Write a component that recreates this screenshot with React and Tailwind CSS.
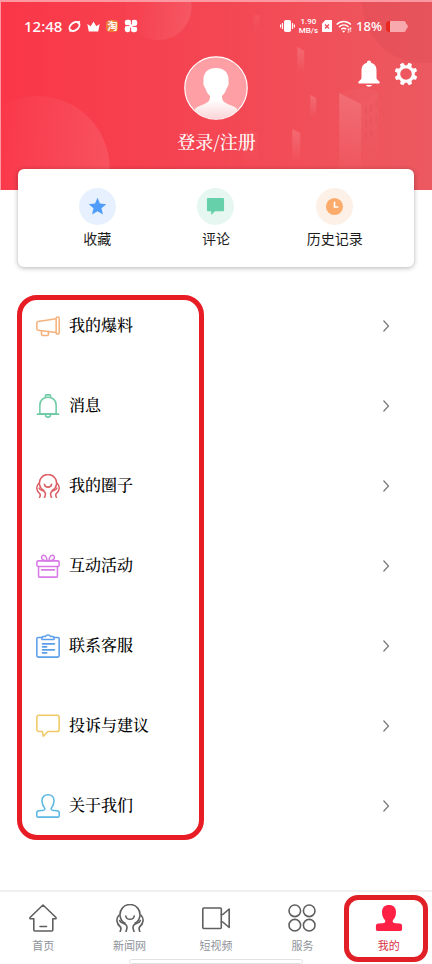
import React from 'react';

const SERIF = "font-['Noto_Serif_CJK_SC','Noto_Sans_CJK_SC',serif]";
const PERSON =
  'M14 .9c-4.200 0-7 2.600-7 7 0 3.400 1 6 2.700 7.900.7.800.9 1.900.2 2.600-.5.500-1.300.7-2.400.8l-4.200.3c-1.500.1-2.400 1-2.400 2.500v3.300c0 1 .6 1.700 1.700 1.700h22.800c1.100 0 1.700-.7 1.700-1.700V22c0-1.500-.9-2.400-2.400-2.500l-4.200-.3c-1.100-.1-1.900-.3-2.400-.8-.7-.7-.5-1.800.2-2.600C20 13.900 21 11.300 21 7.900c0-4.400-2.800-7-7-7z';

const Line = ({ children, className = 'w-6 h-6', width = 1.8 }) => (
  <svg
    viewBox="0 0 28 28"
    className={className}
    fill="none"
    stroke="currentColor"
    strokeWidth={width}
    strokeLinecap="round"
    strokeLinejoin="round"
    aria-hidden="true"
  >
    {children}
  </svg>
);

const HandsShape = () => (
  <>
    <path d="M9 19.200a10 10 0 1 1 10 0" />
    <path d="M9.800 12c.6 4.400 7.800 4.400 8.400 0" />
    <path d="M3.200 11C1.200 13 .6 14.500 1 17c.4 2.500 1 3.800 2.600 5 1.400 1.100 1.500 3.500.6 5.300M3.700 16.500c.3 1.500 1.300 2 2.800 2.500 2.600.8 4.500 1.800 4.500 4.300 0 1.400-.4 2.700-1 4" />
    <path d="M24.800 11c2 2 2.600 3.500 2.200 6-.4 2.500-1 3.800-2.600 5-1.400 1.100-1.500 3.500-.6 5.300M24.300 16.500c-.3 1.500-1.300 2-2.800 2.500-2.600.8-4.500 1.800-4.500 4.300 0 1.400.4 2.700 1 4" />
  </>
);

const menuItems = [
  {
    name: '我的爆料',
    color: 'text-[#f5b27c]',
    shape: (
      <>
        <path d="M23.500 5.500 2.500 8.800c-1 .2-1.500.8-1.500 1.700v6.800c0 .9.500 1.500 1.500 1.600l21 2.600" />
        <rect x="23.500" y="3.500" width="3.600" height="20" rx="1.500" />
        <path d="M6.500 19.500V24c0 .6.400 1 1 1h6c.6 0 1-.4 1-1v-3.500" />
      </>
    ),
  },
  {
    name: '消息',
    color: 'text-[#6fcaa5]',
    shape: (
      <>
        <path d="M11 4V2c0-.6.400-1 1-1h4c.6 0 1 .4 1 1v2M4.500 23V13c0-5.500 4-9.300 9.500-9.300s9.500 3.800 9.500 9.300v10M1.500 23.500l3-.5h19l3 .5zM11 24c.3 4 5.700 4 6 0" />
      </>
    ),
  },
  { name: '我的圈子', color: 'text-[#dc6066]', shape: <HandsShape /> },
  {
    name: '互动活动',
    color: 'text-[#d97be6]',
    shape: (
      <>
        <rect x="1" y="8" width="26" height="6.500" rx="1.500" />
        <path d="M3 14.500V26c0 .6.400 1 1 1h20c.6 0 1-.4 1-1V14.500M6.500 18.500h15" />
        <path d="M13 8C8.500 8 6 6 6.500 3.500 7 1 10 .5 11.500 3c1 1.500 1.500 3 1.500 5zM15 8c4.500 0 7-2 6.500-4.500C21 1 18 .5 16.500 3 15.500 4.500 15 6 15 8z" />
      </>
    ),
  },
  {
    name: '联系客服',
    color: 'text-[#5b9fea]',
    shape: (
      <>
        <path d="M7 4H2.500C1.600 4 1 4.600 1 5.500v20c0 .9.600 1.500 1.500 1.500h23c.9 0 1.500-.6 1.500-1.500v-20c0-.9-.6-1.500-1.500-1.500H21" />
        <path d="M7 6.500V4c0-.6.400-1 1-1h3c.8-2.500 5.200-2.500 6 0h3c.6 0 1 .4 1 1v2.500zM7.500 11.500h14M7.500 15h5M7.500 18.500h14M7.500 22h5" />
      </>
    ),
  },
  {
    name: '投诉与建议',
    color: 'text-[#f0c966]',
    shape: (
      <path d="M3.500 1.500h21c1.500 0 2.500 1 2.500 2.500v14c0 1.500-1 2.500-2.500 2.500H14L8.500 26l-1-5.500h-4C2 20.500 1 19.500 1 18V4c0-1.500 1-2.500 2.500-2.500z" />
    ),
  },
  { name: '关于我们', color: 'text-[#5cb8e4]', shape: <path d={PERSON} /> },
];

const shortcuts = [
  {
    name: '收藏',
    style: 'bg-[#e6f0fe] text-[#4f9df8]',
    shape: <path d="m10 .8 2.600 6.100 6.600.6-5 4.400 1.500 6.500-5.700-3.500-5.700 3.500 1.500-6.500-5-4.400 6.600-.6z" />,
  },
  {
    name: '评论',
    style: 'bg-[#e5f7f0] text-[#66d0aa]',
    shape: <path d="M2 1h16c.600 0 1 .4 1 1v12c0 .6-.4 1-1 1H9.500l-4 4v-4H2c-.6 0-1-.4-1-1V2c0-.6.400-1 1-1z" />,
  },
  {
    name: '历史记录',
    style: 'bg-[#fdf0e6] text-[#fbac6c]',
    shape: (
      <>
        <circle cx="10" cy="10" r="9" />
        <path d="M10 5v5.500h4" fill="none" stroke="#fff" strokeWidth="1.700" />
      </>
    ),
  },
];

const tabs = [
  {
    name: '首页',
    shape: <path d="M14 1 1 13.500v1.200h3.800V26c0 .6.400 1 1 1h17c.6 0 1-.4 1-1V14.700H27v-1.200zM11 22.500h6.500" />,
  },
  { name: '新闻网', shape: <HandsShape /> },
  {
    name: '短视频',
    shape: (
      <>
        <rect x="0.800" y="4" width="18.500" height="20.500" rx="1" />
        <path d="M19.300 10.500h1.500L27.200 5v18.500l-6.400-5.500h-1.500" />
      </>
    ),
  },
  {
    name: '服务',
    shape: (
      <>
        <circle cx="6.800" cy="6.800" r="5.800" />
        <circle cx="21.200" cy="6.800" r="5.800" />
        <circle cx="6.800" cy="21.200" r="5.800" />
        <circle cx="21.200" cy="21.200" r="5.800" />
      </>
    ),
  },
  { name: '我的', active: true },
];

const HeaderArt = () => (
  <svg
    className="absolute inset-0 w-full h-full"
    viewBox="0 0 432 190"
    preserveAspectRatio="xMidYMid slice"
    aria-hidden="true"
  >
    <defs>
      <linearGradient id="tower" x1="0" y1="0" x2="0" y2="1">
        <stop offset="0" stopColor="#fff" stopOpacity="0.160" />
        <stop offset="1" stopColor="#fff" stopOpacity="0" />
      </linearGradient>
      <linearGradient id="bubble" x1="0.200" y1="0.500" x2="1" y2="0.600">
        <stop offset="0" stopColor="#fff" stopOpacity="0.010" />
        <stop offset="1" stopColor="#fff" stopOpacity="0.100" />
      </linearGradient>
    </defs>
    <circle cx="36" cy="168" r="73" fill="url(#bubble)" />
    <circle cx="158" cy="6" r="33" fill="url(#bubble)" />
    <circle cx="424" cy="0" r="62" fill="#c93c48" fillOpacity="0.160" />
    <path d="M339 92l22 11v78h-22z" fill="url(#tower)" />
    <path d="M361 103l17-12v84h-17z" fill="url(#tower)" opacity="0.300" />
    <path d="M339 92l25-6 14 5-17 12z" fill="#fff" opacity="0.030" />
    <path d="M292 128l8 4v30h-8z" fill="url(#tower)" />
    <path d="M297 46l7 4v22h-7z" fill="url(#tower)" />
    <path d="M310 94l6 3v20h-6z" fill="url(#tower)" />
    <path d="M243 132l8-3 6 4v32h-14z" fill="url(#tower)" opacity="0.300" />
    <path d="M253 14h6v18h-6z" fill="url(#tower)" opacity="0.300" />
    <path
      d="M366 106v8M371 103v8M376 100v8M366 119v8M371 116v8M376 113v8M366 132v6M371 129v6"
      stroke="#c8404c"
      strokeOpacity="0.300"
    />
  </svg>
);

const StatusBar = () => (
  <div className="relative h-12 pl-[23px] pr-6 flex items-center justify-between font-['Noto_Sans',sans-serif]">
    <div className="flex items-center gap-[6px]">
      <span className="text-[15px] leading-5 font-medium">12:48</span>
      <svg viewBox="0 0 13 13" className="w-[13px] h-[13px]" fill="none" stroke="#fff" strokeWidth="1.900" aria-hidden="true">
        <ellipse cx="6.500" cy="6.500" rx="5.600" ry="3.700" transform="rotate(-38 6.500 6.500)" />
        <path d="M1.500 11.500 4 10M9 3l3-1.500" strokeWidth="1.400" />
      </svg>
      <svg viewBox="0 0 13 13" className="w-[13px] h-[13px]" fill="#fff" aria-hidden="true">
        <path d="M.3 4 3.700 6.200 6.500 1.500l2.800 4.700L12.700 4l-1.500 7.500H1.800z" />
      </svg>
      <span className="w-3 h-3 rounded-sm bg-[#ed7b3a] flex items-center justify-center text-[10px] leading-3 font-bold font-['Noto_Sans_CJK_SC',sans-serif]">
        淘
      </span>
      <svg viewBox="0 0 14 14" className="w-[14px] h-[14px]" fill="#fff" aria-hidden="true">
        <rect x="0.800" y="0.800" width="6.400" height="5.600" rx="2.400" />
        <rect x="7.600" y="0.800" width="5.600" height="6.400" rx="2.400" />
        <rect x="6.800" y="7.600" width="6.400" height="5.600" rx="2.400" />
        <rect x="0.800" y="6.800" width="5.600" height="6.400" rx="2.400" />
        <rect x="5" y="5" width="4" height="4" />
        <path d="M7.400 2v3.500M12 7.400H8.500M6.600 12V8.500M2 6.600h3.500" stroke="#f43f4e" strokeWidth="0.800" />
      </svg>
    </div>
    <div className="flex items-center gap-1">
      <svg viewBox="0 0 15 14" className="w-[15px] h-[14px]" fill="#fff" aria-hidden="true">
        <rect x="4" y="1" width="7" height="12" rx="1.800" />
        <path d="M2.500 4v6M.6 5.500v3M12.500 4v6M14.400 5.500v3" stroke="#fff" strokeWidth="1.200" />
      </svg>
      <span className="flex flex-col items-center text-[8px] leading-[9px] font-medium font-['Roboto',sans-serif]">
        <span>1.90</span>
        <span>MB/s</span>
      </span>
      <svg viewBox="0 0 10 12" className="w-[10px] h-3" aria-hidden="true">
        <path d="M3.500 0H9c.6 0 1 .4 1 1v10c0 .6-.4 1-1 1H1c-.6 0-1-.4-1-1V3.500z" fill="#fff" />
        <path d="m3 4.500 4 4m0-4-4 4" stroke="#e94a55" strokeWidth="1.300" />
      </svg>
      <svg viewBox="0 0 16 13" className="w-4 h-[13px]" fill="none" stroke="#fff" strokeWidth="1.500" aria-hidden="true">
        <path d="M.7 4.500c4-4 10.100-4 14.100 0M3 7c2.900-2.700 6.800-2.700 9.500 0M5.200 9.300c1.600-1.400 3.400-1.400 5 0" />
        <path d="m6 10.700 1.700 2 1.700-2z" fill="#fff" stroke="none" />
        <path d="M12.500 8.500v4M14.500 7.500v4" strokeDasharray="2 1" />
      </svg>
      <span className="text-[13px] leading-5 font-medium">18%</span>
      <svg viewBox="0 0 22 11" className="w-[22px] h-[11px]" aria-hidden="true">
        <rect width="20" height="11" rx="2.500" fill="#f7a9ad" />
        <path d="M20 3c2.500.5 2.500 4.500 0 5z" fill="#f7a9ad" />
        <path d="M2.500 0H4v11H2.500A2.500 2.500 0 0 1 0 8.500v-6A2.500 2.500 0 0 1 2.500 0z" fill="#e8281f" />
      </svg>
    </div>
  </div>
);

const Header = () => (
  <header className="relative border-t-2 border-l border-[#fb98a1] bg-linear-to-r from-[#fa3648] via-[#f44653] to-[#ec5960] text-white pb-[34px]">
    <HeaderArt />
    <StatusBar />
    <div className="relative grid grid-cols-3 items-start pt-[6px]">
      <span />
      <a href="#login" className="flex flex-col items-center">
        <svg viewBox="0 0 64 64" className="w-16 h-16" aria-hidden="true">
          <defs>
            <clipPath id="avatar">
              <circle cx="32" cy="32" r="31" />
            </clipPath>
            <linearGradient id="body" x1="0" y1="0" x2="0" y2="1">
              <stop offset="0.600" stopColor="#fff" />
              <stop offset="1" stopColor="#fbd3d6" />
            </linearGradient>
          </defs>
          <circle cx="32" cy="32" r="31.200" fill="#fd9fa4" stroke="#fff" strokeWidth="1.200" />
          <path
            clipPath="url(#avatar)"
            d="M32 12c-8 0-13 4.500-12.500 13 0 2-.5 3 .5 5 .5 1.500 1.500 2 2 4 1 3 2.500 4.500 4 6 0 3-.5 5-3 6.500-4 2.500-9 3.500-11.500 5.500L8 64h48l-3.500-12c-2.500-2-7.500-3-11.500-5.500-2.500-1.500-3-3.500-3-6.500 1.500-1.500 3-3 4-6 .5-2 1.500-2.500 2-4 1-2 .5-3 .5-5C45 16.500 40 12 32 12z"
            fill="url(#body)"
          />
        </svg>
        <span className={`mt-2 mb-[2px] text-[18px] leading-[26px] font-medium whitespace-nowrap ${SERIF}`}>登录/注册</span>
      </a>
      <div className="flex items-center justify-end gap-[14px] pt-1 pr-[14px]">
        <button type="button" aria-label="通知">
          <svg viewBox="0 0 22 28" className="w-[22px] h-7" fill="#fff" aria-hidden="true">
            <path d="M11 .5c1.300 0 2 .8 2 2.200 3.600.9 5.500 3.600 5.500 7.300v7.500c0 1.500.8 2.300 2 3.200 1.500 1 1.500 2.800.5 2.800H1c-1 0-1-1.800.5-2.800 1.200-.9 2-1.700 2-3.200V10c0-3.700 1.900-6.400 5.500-7.300 0-1.400.7-2.200 2-2.200zM8 25h6c-.8 2.300-5.200 2.300-6 0z" />
          </svg>
        </button>
        <button type="button" aria-label="设置">
          <svg viewBox="0 0 24 24" className="w-6 h-6" aria-hidden="true">
            <circle cx="12" cy="12" r="7.300" fill="none" stroke="#fff" strokeWidth="3" />
            <g fill="#fff">
              {[0, 45, 90, 135, 180, 225, 270, 315].map((a) => (
                <path key={a} d="M9.500 4.500 10.300.6h3.400l.8 3.900z" transform={`rotate(${a + 22} 12 12)`} />
              ))}
            </g>
          </svg>
        </button>
      </div>
    </div>
  </header>
);

const App = () => {
  return (
    <div className="min-h-screen flex flex-col bg-white text-[#1c1c1c] font-['Noto_Sans_CJK_SC',sans-serif]">
      <Header />

      <section className="relative -mt-[21px] mx-[18px] px-5 pt-[19px] pb-[19px] grid grid-cols-3 rounded-md bg-white shadow-[0_1px_5px_rgba(0,0,0,0.3)]">
        {shortcuts.map((item) => (
          <a key={item.name} href="#shortcut" className="flex flex-col items-center">
            <span className={`w-[37px] h-[37px] rounded-full flex items-center justify-center ${item.style}`}>
              <svg viewBox="0 0 20 20" className="w-[19px] h-[19px]" fill="currentColor" aria-hidden="true">
                {item.shape}
              </svg>
            </span>
            <span className="mt-[3px] text-[14px] leading-5">{item.name}</span>
          </a>
        ))}
      </section>

      <main className="relative mt-[19px] mb-11">
        <ul>
          {menuItems.map((item) => (
            <li key={item.name}>
              <a href="#menu" className="h-20 pl-9 pr-[42px] flex items-center">
                <span className={item.color}>
                  <Line>{item.shape}</Line>
                </span>
                <span className={`ml-[9px] pb-[2px] text-[16px] leading-6 font-medium text-black ${SERIF}`}>{item.name}</span>
                <svg viewBox="0 0 8 14" className="ml-auto w-2 h-[14px]" fill="none" stroke="#777" strokeWidth="1.200" aria-hidden="true">
                  <path d="m1.500 1.500 5 5.500-5 5.500" />
                </svg>
              </a>
            </li>
          ))}
        </ul>
        {/* highlight frame over the menu */}
        <div className="absolute top-[9px] bottom-[6px] left-[17px] w-[187px] rounded-[20px] border-5 border-[#e81c24] pointer-events-none" />
      </main>

      <nav className="relative mt-auto border-t-2 border-[#f0f0f0] pt-3 pb-[11px] grid grid-cols-5">
        {tabs.map((tab) => (
          <a
            key={tab.name}
            href="#tab"
            className={`flex flex-col items-center ${tab.active ? 'text-[#d8323f]' : 'text-[#8e9299]'}`}
          >
            {tab.active ? (
              <svg viewBox="0 0 28 28" className="w-7 h-7" fill="#fd2146" aria-hidden="true">
                <path d={PERSON} />
              </svg>
            ) : (
              <span className="text-[#5f5f5f]">
                <Line className="w-7 h-7" width={1.6}>
                  {tab.shape}
                </Line>
              </span>
            )}
            <span className="mt-[5px] text-[11px] leading-4">{tab.name}</span>
          </a>
        ))}
        <div className="absolute bottom-0 left-1/2 -translate-x-1/2 w-[174px] h-[5px] rounded-sm border border-[#e2e2e2] bg-white" />
        <div className="absolute top-[3px] bottom-[2px] right-1 w-[84px] rounded-[14px] border-5 border-[#e02026] pointer-events-none" />
      </nav>
    </div>
  );
};

export default App;
